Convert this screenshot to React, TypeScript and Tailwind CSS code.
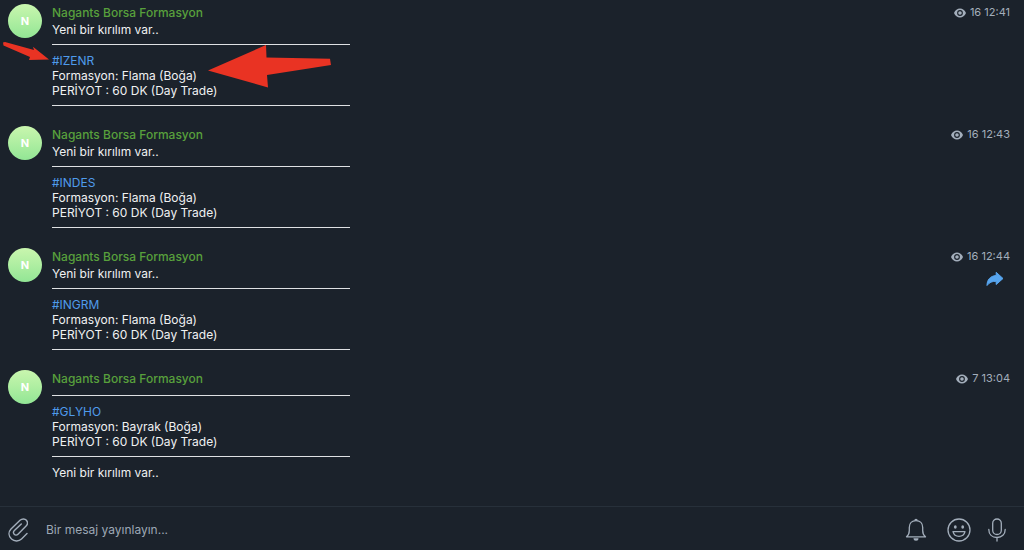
import { useState } from "react";

interface Message {
    tag: string;
    pattern: string;
    views: number;
    time: string;
    noteLast?: boolean;
    shared?: boolean;
}

const messages: Message[] = [
    { tag: "#IZENR", pattern: "Flama", views: 16, time: "12:41" },
    { tag: "#INDES", pattern: "Flama", views: 16, time: "12:43" },
    { tag: "#INGRM", pattern: "Flama", views: 16, time: "12:44", shared: true },
    { tag: "#GLYHO", pattern: "Bayrak", views: 7, time: "13:04", noteLast: true },
];

function EyeIcon() {
    return (
        <svg className="w-3 h-3" viewBox="0 0 12 12" aria-hidden="true">
            <path fill="currentColor" fillRule="evenodd" d="M0 6C1.2 3.1 3.4 1.5 6 1.5S10.8 3.1 12 6C10.8 8.900 8.600 10.500 6 10.500S1.200 8.900 0 6Zm6-2.900a2.900 2.900 0 1 0 0 5.800 2.900 2.900 0 0 0 0-5.800Zm0 1.100a1.800 1.800 0 1 1 0 3.600 1.800 1.800 0 0 1 0-3.600Z" />
        </svg>
    )
}

function ShareIcon() {
    return (
        <svg className="w-[18px] h-4" viewBox="0 0 18 16" aria-hidden="true">
            <path fill="#57a5ee" stroke="#57a5ee" strokeLinejoin="round" d="M10.2 1.3 17 7.500 10.200 13.500V10.300C6 10.200 3.500 11.300 1 14.500 1 9 4 5 10.200 4.500Z" />
        </svg>
    )
}

function PaperclipIcon() {
    return (
        <svg className="w-5 h-6" viewBox="0 0 20 24" fill="none" stroke="currentColor" strokeWidth="1.4" strokeLinecap="round" aria-hidden="true">
            <path d="M19 15.500 13.500 21C11 23.400 6.500 23.800 3.500 21 .3 18 .3 14 3 11L12 2.300C14 .500 17 .500 18.400 2.200 19.800 4 19.600 6.500 18.100 8L10 16.200C8.800 17.400 7.200 17.400 6.200 16.300 5.200 15.200 5.300 13.700 6.400 12.600L13.300 5.900" />
        </svg>
    )
}

function BellIcon() {
    return (
        <svg className="w-[22px] h-6" viewBox="0 0 22 24" fill="none" stroke="currentColor" strokeWidth="1.3" strokeLinejoin="round" aria-hidden="true">
            <path d="M1.500 18.800C3.700 17.300 4.300 15.500 4.300 12.500V9.500C4.300 5.300 7 2.700 11 2.700S17.700 5.300 17.700 9.500V12.500C17.700 15.500 18.300 17.300 20.500 18.800Z" />
            <path d="M9.900 2.500a1.100 1.100 0 0 1 2.200 0" />
            <path fill="currentColor" stroke="none" d="M8.500 20.200h5a2.500 2.500 0 0 1-5 0Z" />
        </svg>
    )
}

function SmileIcon() {
    return (
        <svg className="w-6 h-6" viewBox="0 0 24 24" fill="none" stroke="currentColor" strokeWidth="1.3" strokeLinejoin="round" aria-hidden="true">
            <circle cx="12" cy="12" r="11" />
            <ellipse cx="8.300" cy="9" rx="1.400" ry="1.800" fill="currentColor" stroke="none" />
            <ellipse cx="15.700" cy="9" rx="1.400" ry="1.800" fill="currentColor" stroke="none" />
            <path d="M6 13.700h12c-.7 3-2.900 4.700-6 4.700s-5.300-1.700-6-4.700Z" />
        </svg>
    )
}

function MicIcon() {
    return (
        <svg className="w-5 h-6" viewBox="0 0 20 24" fill="none" stroke="currentColor" strokeWidth="1.3" strokeLinecap="round" aria-hidden="true">
            <rect x="5.700" y="1" width="8.600" height="15.500" rx="4.300" />
            <path d="M1.800 11.500c0 4.900 3.300 8 8.200 8s8.200-3.100 8.200-8M10 19.500V23" />
        </svg>
    )
}

function Divider() {
    return (
        <div className="w-[298px] h-4 pt-[7px]">
            <hr className="border-t border-[#dfe1e3]" />
        </div>
    )
}

function MessageRow({ message }: { message: Message }) {
    return (
        <article className="flex items-start pl-2 pr-3.5">
            <div className="size-[34px] shrink-0 rounded-full bg-linear-to-b from-[#c9f6ae] to-[#92e695] flex items-center justify-center text-[11px] font-bold text-white">N</div>

            <div className="flex-1 ml-2.5 text-xs leading-[15px] text-[#f0f1f2]">
                <h2 className="mb-px leading-[17px] font-medium text-[#58a03c]">Nagants Borsa Formasyon</h2>
                {!message.noteLast && <p>Yeni bir kırılım var..</p>}
                <Divider />
                <p><a href={message.tag} className="text-[#4f9bec]">{message.tag}</a></p>
                <p>Formasyon: {message.pattern} (Boğa)</p>
                <p>PERİYOT : 60 DK (Day Trade)</p>
                <Divider />
                {message.noteLast && <p>Yeni bir kırılım var..</p>}
            </div>

            <div className="flex flex-col items-end text-[11px] leading-[17px] text-[#a3aebb]">
                <div className="flex items-center gap-1">
                    <EyeIcon />
                    <span>{message.views} {message.time}</span>
                </div>
                {message.shared && (
                    <button type="button" aria-label="Paylaş" className="mt-1.5 mr-1.5 cursor-pointer">
                        <ShareIcon />
                    </button>
                )}
            </div>
        </article>
    )
}

export default function App() {
    const [draft, setDraft] = useState<string>("");

    return (
        <div className="min-h-screen flex flex-col bg-[#1b222b] font-['Inter',sans-serif]">
            <main className="relative flex-1 flex flex-col gap-3 pt-1 pb-5">
                {messages.map((message) => (
                    <MessageRow key={message.tag} message={message} />
                ))}

                {/* red arrows drawn over the first message */}
                <svg className="absolute left-0 top-0 w-[340px] h-[90px] pointer-events-none" viewBox="0 0 340 90" fill="#e93323" aria-hidden="true">
                    <path d="M3 42.500 5 42 34 50 33 46.800 49 59.500 29 60 30 57 3.500 45.500Z" />
                    <path d="M208 70.500 266 45 266.500 57.600 330 58.700 331 65 267 75 268 87.500Z" />
                </svg>
            </main>

            <footer className="flex items-center pl-2 pr-[17px] pt-0.5 h-11 border-t border-[#27303a] text-[#a3aebb]">
                <button type="button" aria-label="Dosya ekle" className="cursor-pointer">
                    <PaperclipIcon />
                </button>
                <input
                    type="text"
                    aria-label="Mesaj"
                    placeholder="Bir mesaj yayınlayın..."
                    value={draft}
                    onChange={(e) => setDraft(e.target.value)}
                    className="flex-1 min-w-0 ml-[18px] text-xs text-[#f0f1f2] placeholder:text-[#9da8b5] outline-none"
                />
                <div className="flex items-center gap-4">
                    <button type="button" aria-label="Bildirimler" className="px-1 cursor-pointer">
                        <BellIcon />
                    </button>
                    <button type="button" aria-label="Emoji" className="cursor-pointer">
                        <SmileIcon />
                    </button>
                    <button type="button" aria-label="Sesli mesaj" className="cursor-pointer">
                        <MicIcon />
                    </button>
                </div>
            </footer>
        </div>
    )
}
